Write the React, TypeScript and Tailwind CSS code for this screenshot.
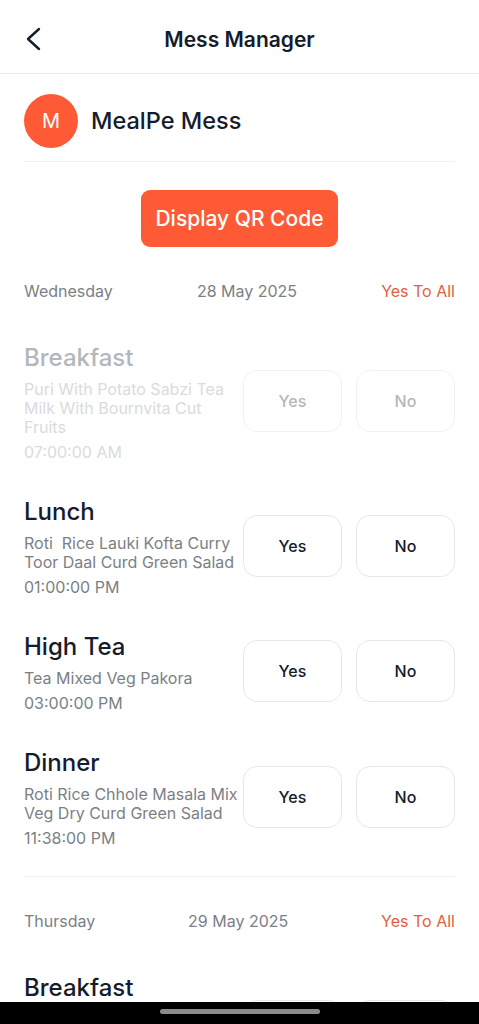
type Meal = {
  name: string;
  items: string;
  time: string;
  disabled?: boolean;
};

const days: { day: string; date: string; meals: Meal[] }[] = [
  {
    day: "Wednesday",
    date: "28 May 2025",
    meals: [
      {
        name: "Breakfast",
        items: "Puri With Potato Sabzi Tea Milk With Bournvita Cut Fruits",
        time: "07:00:00 AM",
        disabled: true,
      },
      {
        name: "Lunch",
        items: "Roti\u00a0 Rice Lauki Kofta Curry Toor Daal Curd Green Salad",
        time: "01:00:00 PM",
      },
      { name: "High Tea", items: "Tea Mixed Veg Pakora", time: "03:00:00 PM" },
      {
        name: "Dinner",
        items: "Roti Rice Chhole Masala Mix Veg Dry Curd Green Salad",
        time: "11:38:00 PM",
      },
    ],
  },
  {
    day: "Thursday",
    date: "29 May 2025",
    meals: [
      {
        name: "Breakfast",
        items: "Puri With Potato Sabzi Tea Milk With Bournvita Cut Fruits",
        time: "07:00:00 AM",
      },
    ],
  },
];

function MealRow({ meal }: { meal: Meal }) {
  const off = meal.disabled;
  return (
    <div className="flex items-center">
      <div className="w-[219px] shrink-0">
        <div className={`text-[24px] leading-[28px] font-medium ${off ? "text-[#b3b7bd]" : "text-[#151c2c]"}`}>
          {meal.name}
        </div>
        <div className={`mt-2 text-[16px] leading-[19px] ${off ? "text-[#d9dbde]" : "text-[#7b7f86]"}`}>
          {meal.items}
        </div>
        <div className={`mt-1.5 text-[16px] leading-[19px] ${off ? "text-[#d9dbde]" : "text-[#7b7f86]"}`}>
          {meal.time}
        </div>
      </div>
      <div className="flex gap-[14px] -mt-1">
        {["Yes", "No"].map(label => (
          <button
            key={label}
            className={`w-[99px] h-[62px] rounded-[14px] border text-[16px] font-medium ${
              off ? "border-[#f1f1f2] text-[#b3b7bd]" : "border-[#e6e7e9] text-[#151c2c]"
            }`}
          >
            {label}
          </button>
        ))}
      </div>
    </div>
  );
}

export default function App() {
  return (
    <div className="relative w-[479px] h-[1024px] overflow-hidden bg-white font-['Inter',sans-serif] text-[#151c2c]">
      <header className="h-[74px] border-b border-[#ececee] flex items-center relative pt-[6px]">
        <svg className="absolute left-[24px] top-[27px]" width="18" height="24" viewBox="0 0 18 24" fill="none">
          <polyline points="15,2 4,12 15,22" stroke="#151c2c" strokeWidth="2.4" strokeLinecap="round" strokeLinejoin="round" />
        </svg>
        <div className="w-full text-center text-[21px] font-semibold">Mess Manager</div>
      </header>

      <div className="px-6">
        <div className="flex items-center gap-[13px] pt-5 pb-[13px] border-b border-[#f0f0f1]">
          <div className="w-[54px] h-[54px] rounded-full bg-[#fe5a36] flex items-center justify-center text-white text-[20px]">
            M
          </div>
          <div className="text-[23.5px] font-medium">MealPe Mess</div>
        </div>

        <div className="flex justify-center mt-[28px]">
          <button className="w-[197px] h-[57px] rounded-[9px] bg-[#fe5a36] text-white text-[21px] font-medium">
            Display QR Code
          </button>
        </div>

        {days.map((d, di) => (
          <div key={d.day} className={di > 0 ? "border-t border-[#f0f0f1] mt-[28px] pt-[34px]" : "mt-[34px]"}>
            <div className="flex justify-between text-[16px] leading-[20px]">
              <span className="text-[#7b7f86]">{d.day}</span>
              <span className="text-[#7b7f86]">{d.date}</span>
              <span className="text-[#e2603f]">Yes To All</span>
            </div>
            <div className="mt-[43px] flex flex-col gap-[36px]">
              {d.meals.map(m => (
                <MealRow key={m.name} meal={m} />
              ))}
            </div>
          </div>
        ))}
      </div>

      <div className="absolute left-0 bottom-0 w-full h-[22px] bg-black flex justify-center pt-[7px]">
        <div className="w-[160px] h-[5px] rounded-full bg-[#8a8a8a]" />
      </div>
    </div>
  );
}
